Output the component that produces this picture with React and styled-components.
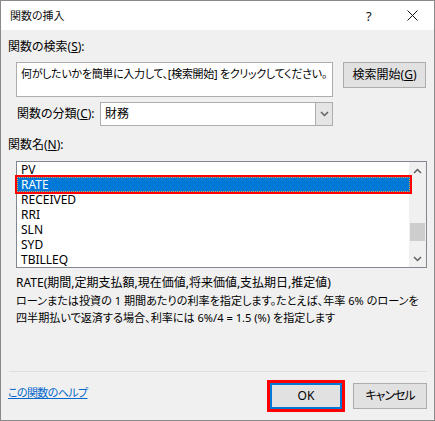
import React from "react";
import styled, { createGlobalStyle } from "styled-components";

const GlobalStyle = createGlobalStyle`
  body {
    margin: 0;
    background: #ffffff;
  }
  * {
    box-sizing: border-box;
  }
`;

const FONT = `"Noto Sans", "Noto Sans CJK JP", sans-serif`;

const functions = ["PV", "RATE", "RECEIVED", "RRI", "SLN", "SYD", "TBILLEQ"];

function Chevron({ up }) {
  return (
    <svg width="9" height="6" viewBox="0 0 9 6">
      <polyline
        points={up ? "1,5 4.5,1.5 8,5" : "1,1 4.5,4.5 8,1"}
        fill="none"
        stroke="#606060"
        strokeWidth="1.5"
      />
    </svg>
  );
}

export default function App() {
  return (
    <>
      <GlobalStyle />
      <Window>
        <TitleBar>
          <Title>関数の挿入</Title>
          <HelpMark>?</HelpMark>
          <CloseMark>
            <svg width="11" height="11" viewBox="0 0 11 11">
              <path d="M0.5 0.5 L10.5 10.5 M10.5 0.5 L0.5 10.5" stroke="#111" strokeWidth="1" />
            </svg>
          </CloseMark>
        </TitleBar>
        <Body>
          <Label>
            関数の検索(<u>S</u>):
          </Label>
          <SearchRow>
            <SearchBox>何がしたいかを簡単に入力して、[検索開始] をクリックしてください。</SearchBox>
            <Button width={83}>
              検索開始(<u>G</u>)
            </Button>
          </SearchRow>
          <CategoryRow>
            <CategoryLabel>
              関数の分類(<u>C</u>):
            </CategoryLabel>
            <Combo>
              <ComboValue>財務</ComboValue>
              <ComboArrow>
                <Chevron />
              </ComboArrow>
            </Combo>
          </CategoryRow>
          <Label top={11}>
            関数名(<u>N</u>):
          </Label>
          <ListBox>
            <Rows>
              {functions.map((name) => (
                <Row key={name} selected={name === "RATE"}>
                  {name}
                </Row>
              ))}
            </Rows>
            <ScrollBar>
              <ScrollArrow>
                <Chevron up />
              </ScrollArrow>
              <Track>
                <Thumb />
              </Track>
              <ScrollArrow>
                <Chevron />
              </ScrollArrow>
            </ScrollBar>
          </ListBox>
          <Syntax>RATE(期間,定期支払額,現在価値,将来価値,支払期日,推定値)</Syntax>
          <Description>
            ローンまたは投資の 1 期間あたりの利率を指定します。たとえば、年率 6% のローンを
            <br />
            四半期払いで返済する場合、利率には 6%/4 = 1.5 (%) を指定します
          </Description>
          <Separator />
          <Footer>
            <HelpLink>この関数のヘルプ</HelpLink>
            <Buttons>
              <Marked>
                <Button width={72} primary>
                  OK
                </Button>
              </Marked>
              <Button width={74} narrow>
                キャンセル
              </Button>
            </Buttons>
          </Footer>
        </Body>
      </Window>
    </>
  );
}

const Window = styled.div`
  width: 435px;
  height: 421px;
  border: 1px solid #8a8a8a;
  display: flex;
  flex-direction: column;
  font-family: ${FONT};
  font-size: 12px;
  font-feature-settings: "palt";
  color: #000;
  background: #f0f0f0;
`;

const TitleBar = styled.div`
  height: 29px;
  background: #ffffff;
  display: flex;
  align-items: center;
  padding-left: 9px;
`;

const Title = styled.div`
  flex: 1;
  font-size: 11px;
  line-height: 16px;
  color: #111;
`;

const HelpMark = styled.div`
  width: 10px;
  font-size: 13px;
  line-height: 16px;
  color: #111;
  margin-right: 31px;
`;

const CloseMark = styled.div`
  display: flex;
  margin-right: 16px;
`;

const Body = styled.div`
  flex: 1;
  display: flex;
  flex-direction: column;
  padding: 0 7px;
`;

const Label = styled.div`
  margin-top: ${(p) => (p.top ? p.top : 9)}px;
  line-height: 16px;
  height: 16px;
`;

const SearchRow = styled.div`
  display: flex;
  align-items: flex-start;
  margin-top: 7px;
  padding-left: 8px;
`;

const SearchBox = styled.div`
  width: 317px;
  height: 35px;
  background: #fff;
  border: 1px solid #adadad;
  padding: 3px 0 0 4px;
  font-size: 11px;
  letter-spacing: -0.3px;
  line-height: 16px;
  white-space: nowrap;
  overflow: hidden;
  margin-right: 10px;
`;

const Button = styled.div`
  width: ${(p) => p.width}px;
  height: 26px;
  background: #e1e1e1;
  border: ${(p) => (p.primary ? "2px solid #0078d7" : "1px solid #adadad")};
  display: flex;
  align-items: center;
  justify-content: center;
  line-height: 16px;
  white-space: nowrap;
  letter-spacing: ${(p) => (p.narrow ? "-1px" : "0")};
`;

const CategoryRow = styled.div`
  display: flex;
  align-items: center;
  margin-top: 5px;
  padding-left: 9px;
`;

const CategoryLabel = styled.div`
  width: 83px;
  line-height: 16px;
`;

const Combo = styled.div`
  width: 233px;
  height: 24px;
  display: flex;
  border: 1px solid #adadad;
  background: #fff;
`;

const ComboValue = styled.div`
  flex: 1;
  padding-left: 4px;
  line-height: 21px;
`;

const ComboArrow = styled.div`
  width: 17px;
  background: #e5e5e5;
  border-left: 1px solid #adadad;
  display: flex;
  align-items: center;
  justify-content: center;
`;

const ListBox = styled.div`
  margin-top: 8px;
  margin-left: 8px;
  width: 411px;
  height: 107px;
  border: 1px solid #828790;
  background: #fff;
  display: flex;
`;

const Rows = styled.div`
  flex: 1;
  display: flex;
  flex-direction: column;
`;

const Row = styled.div`
  height: 15px;
  line-height: 15px;
  padding-left: 4px;
  margin-right: -1px;
  color: ${(p) => (p.selected ? "#fff" : "#000")};
  background: ${(p) => (p.selected ? "#0078d7" : "transparent")};
  outline: ${(p) => (p.selected ? "2px solid #ff0000" : "none")};
  position: relative;
  z-index: 1;
  &::after {
    content: "";
    display: ${(p) => (p.selected ? "block" : "none")};
    position: absolute;
    inset: 0;
    border: 1px dotted #e8a040;
  }
`;

const ScrollBar = styled.div`
  width: 17px;
  background: #f0f0f0;
  display: flex;
  flex-direction: column;
`;

const ScrollArrow = styled.div`
  height: 17px;
  display: flex;
  align-items: center;
  justify-content: center;
`;

const Track = styled.div`
  flex: 1;
  padding: 44px 1px 0 1px;
`;

const Thumb = styled.div`
  height: 18px;
  background: #cdcdcd;
`;

const Syntax = styled.div`
  margin-top: 7px;
  padding-left: 8px;
  line-height: 16px;
  white-space: nowrap;
`;

const Description = styled.div`
  margin-top: 1px;
  padding-left: 8px;
  font-size: 11.1px;
  line-height: 17px;
  white-space: nowrap;
`;

const Separator = styled.div`
  margin-top: auto;
  height: 1px;
  background: #dfdfdf;
  margin-left: 1px;
`;

const Footer = styled.div`
  display: flex;
  align-items: flex-start;
  justify-content: space-between;
  height: 48px;
  padding-top: 11px;
`;

const HelpLink = styled.a`
  color: #0066cc;
  text-decoration: underline;
  font-size: 11px;
  letter-spacing: -0.6px;
  line-height: 16px;
  margin-top: 2px;
`;

const Buttons = styled.div`
  display: flex;
  gap: 11px;
`;

const Marked = styled.div`
  outline: 3px solid #ff0000;
`;
